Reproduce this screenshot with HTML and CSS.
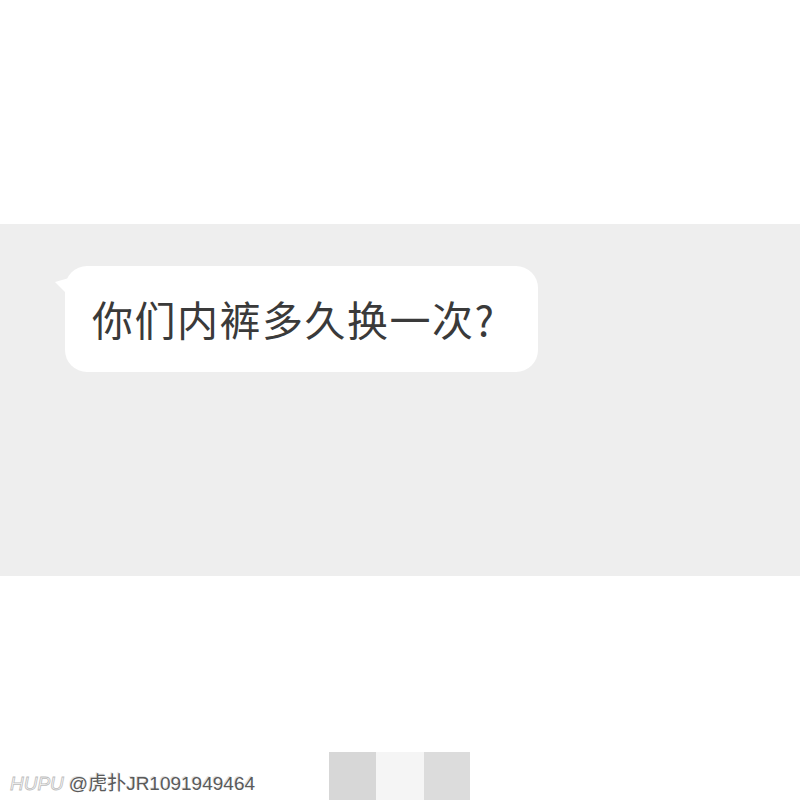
FILE: index.html
```html
<!DOCTYPE html>
<html lang="zh">
<head>
<meta charset="utf-8">
<link rel="stylesheet" href="styles.css">
</head>
<body>
<div class="page">
  <div class="top"></div>
  <div class="band">
    <div class="bubble">
      <span class="tail"></span>
      <span class="msg">你们内裤多久换一次<span class="q">?</span></span>
    </div>
  </div>
  <div class="bottom">
    <div class="mark"><span class="hupu">HUPU</span><span class="handle">@虎扑JR1091949464</span></div>
    <div class="tiles">
      <span class="tile t1"></span>
      <span class="tile t2"></span>
      <span class="tile t3"></span>
    </div>
  </div>
</div>
</body>
</html>
```
FILE: styles.css
```css
html, body {
  margin: 0;
  padding: 0;
  background: #ffffff;
}
.page {
  width: 800px;
  height: 800px;
  display: flex;
  flex-direction: column;
  overflow: hidden;
  font-family: "Noto Sans CJK SC", "Noto Sans", sans-serif;
}
.top {
  height: 224px;
  flex: none;
}
.band {
  height: 352px;
  flex: none;
  background: #eeeeee;
  padding: 42px 0 0 65px;
  box-sizing: border-box;
}
.bubble {
  position: relative;
  width: 473px;
  height: 106px;
  background: #ffffff;
  border-radius: 22px;
  display: flex;
  align-items: center;
  padding-left: 27px;
  box-sizing: border-box;
}
.tail {
  position: absolute;
  left: -10px;
  top: 12px;
  width: 0;
  height: 0;
  border-top: 4px solid transparent;
  border-right: 14px solid #ffffff;
  border-bottom: 14px solid transparent;
}
.msg {
  font-size: 41px;
  letter-spacing: 1.5px;
  color: #3a3a3a;
  line-height: 1;
  margin-top: -2px;
}
.q {
  letter-spacing: 0;
}
.bottom {
  flex: 1;
  position: relative;
  display: flex;
  align-items: flex-end;
}
.mark {
  position: absolute;
  left: 10px;
  bottom: 5px;
  display: flex;
  align-items: baseline;
  gap: 5px;
  font-family: "Liberation Sans", "Noto Sans CJK SC", sans-serif;
  font-size: 19px;
}
.hupu {
  font-style: italic;
  color: #fafafa;
  -webkit-text-stroke: 0.8px #bdbdbd;
}
.handle {
  color: #5a5a5a;
  text-shadow: 1px 1px 0 #ffffff, -1px -1px 0 #e2e2e2;
}
.tiles {
  display: flex;
  margin-left: 329px;
  height: 48px;
}
.tile {
  width: 47px;
  height: 48px;
}
.t1 { background: #d7d7d7; }
.t2 { background: #f5f5f5; width: 48px; }
.t3 { background: #dcdcdc; width: 46px; }
```
